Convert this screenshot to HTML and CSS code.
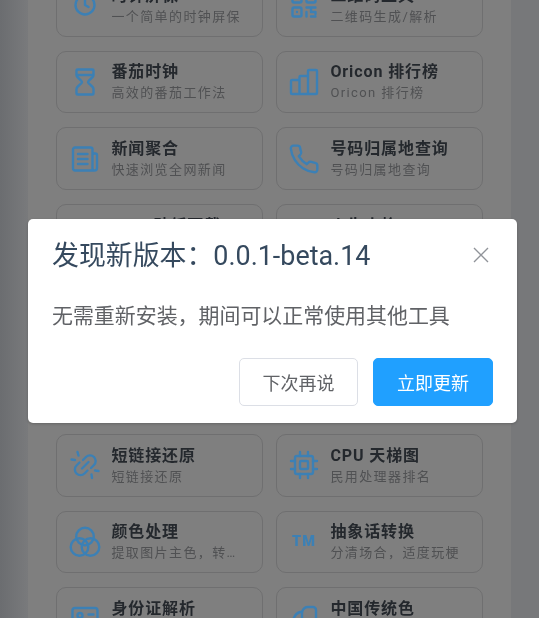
FILE: index.html
```html
<!DOCTYPE html>
<html lang="en">
<head>
    <meta charset="UTF-8">
    <meta name="viewport" content="width=device-width, initial-scale=1.0">
    <title>工具箱</title>
    <link rel="stylesheet" href="styles.css">
</head>
<body>
    <div class="page">
        <div class="side-left"></div>
        <div class="panel">
            <div class="tool-grid">
                <div class="card">
                    <svg class="icon" viewBox="0 0 32 32"><circle cx="16" cy="16" r="9.5"/><path d="M16 10v6l3.500 2"/></svg>
                    <div class="card-text"><div class="card-title">时钟屏保</div><div class="card-sub">一个简单的时钟屏保</div></div>
                </div>
                <div class="card">
                    <svg class="icon" viewBox="0 0 32 32"><rect x="4.500" y="4.500" width="9" height="9" rx="1.500"/><rect x="18.500" y="4.500" width="9" height="9" rx="1.500"/><rect x="4.500" y="18.500" width="9" height="9" rx="1.500"/><path d="M9 23h.01M18.500 18.500h9M23 18.500v4.500h4.500v2M27.500 27.500h-4.500M18.500 23v4.500"/></svg>
                    <div class="card-text"><div class="card-title">二维码工具</div><div class="card-sub">二维码生成/解析</div></div>
                </div>
                <div class="card">
                    <svg class="icon" viewBox="0 0 32 32"><path d="M8.500 3.500h15a1 1 0 0 1 1 1V9c0 3-5.500 5-5.500 7s5.500 4 5.500 7v4.500a1 1 0 0 1-1 1h-15a1 1 0 0 1-1-1V23c0-3 5.500-5 5.500-7s-5.500-4-5.500-7V4.500a1 1 0 0 1 1-1z"/><path d="M8 9h16"/></svg>
                    <div class="card-text"><div class="card-title">番茄时钟</div><div class="card-sub">高效的番茄工作法</div></div>
                </div>
                <div class="card">
                    <svg class="icon" viewBox="0 0 32 32"><path d="M3 15a1 1 0 0 1 1-1h7.500v14H4a1 1 0 0 1-1-1zM11.500 11a1 1 0 0 1 1-1H20v18h-8.500zM20 5a1 1 0 0 1 1-1h7a1 1 0 0 1 1 1v22a1 1 0 0 1-1 1h-8z"/></svg>
                    <div class="card-text"><div class="card-title">Oricon 排行榜</div><div class="card-sub">Oricon 排行榜</div></div>
                </div>
                <div class="card">
                    <svg class="icon" viewBox="0 0 32 32"><path d="M23.500 27.500H6a2 2 0 0 1-2-2V6.500a2 2 0 0 1 2-2h15.500a2 2 0 0 1 2 2zM23.500 10.500h3a1.500 1.500 0 0 1 1.500 1.500v13a2.500 2.500 0 0 1-2.500 2.500h-2"/><path d="M9 11h9.500M9 16h9.500M9 21h9.500"/></svg>
                    <div class="card-text"><div class="card-title">新闻聚合</div><div class="card-sub">快速浏览全网新闻</div></div>
                </div>
                <div class="card">
                    <svg class="icon icon-24" viewBox="0 0 24 24"><path d="M22 16.920v3a2 2 0 0 1-2.180 2 19.790 19.790 0 0 1-8.630-3.070 19.500 19.500 0 0 1-6-6 19.790 19.790 0 0 1-3.070-8.670A2 2 0 0 1 4.110 2h3a2 2 0 0 1 2 1.720 12.840 12.840 0 0 0 .7 2.810 2 2 0 0 1-.45 2.110L8.090 9.910a16 16 0 0 0 6 6l1.270-1.270a2 2 0 0 1 2.110-.45 12.840 12.840 0 0 0 2.810.7A2 2 0 0 1 22 16.920z"/></svg>
                    <div class="card-text"><div class="card-title">号码归属地查询</div><div class="card-sub">号码归属地查询</div></div>
                </div>
                <div class="card">
                    <div class="icon"></div>
                    <div class="card-text"><div class="card-title">LINE 贴纸下载</div><div class="card-sub">LINE 贴纸下载</div></div>
                </div>
                <div class="card">
                    <div class="icon"></div>
                    <div class="card-text"><div class="card-title">人生小格</div><div class="card-sub">人生小格</div></div>
                </div>
                <div class="card"></div>
                <div class="card"></div>
                <div class="card"></div>
                <div class="card"></div>
                <div class="card">
                    <svg class="icon" viewBox="0 0 32 32"><path d="M14 11l3-3a5.500 5.500 0 0 1 8 8l-3 3M18.500 21.500l-3 3a5.500 5.500 0 0 1-8-8l3-3M13 19.500l6.500-6.500M8.500 3l1 3.500M2.500 10.500l3.500 .5M22.500 25.500l.5 3.500M26 21.500l3.500 .5"/></svg>
                    <div class="card-text"><div class="card-title">短链接还原</div><div class="card-sub">短链接还原</div></div>
                </div>
                <div class="card">
                    <svg class="icon" viewBox="0 0 32 32"><rect x="7" y="7" width="18" height="18" rx="2"/><rect x="12" y="12" width="8" height="8" rx="1"/><path d="M12 3v4M20 3v4M12 25v4M20 25v4M3 12h4M3 20h4M25 12h4M25 20h4"/></svg>
                    <div class="card-text"><div class="card-title">CPU 天梯图</div><div class="card-sub">民用处理器排名</div></div>
                </div>
                <div class="card">
                    <svg class="icon" viewBox="0 0 32 32"><circle cx="16" cy="10.500" r="8.800"/><circle cx="10.500" cy="21" r="8.800"/><circle cx="21.500" cy="21" r="8.800"/></svg>
                    <div class="card-text"><div class="card-title">颜色处理</div><div class="card-sub">提取图片主色，转换颜色格式</div></div>
                </div>
                <div class="card">
                    <div class="icon icon-tm">TM</div>
                    <div class="card-text"><div class="card-title">抽象话转换</div><div class="card-sub">分清场合，适度玩梗</div></div>
                </div>
                <div class="card">
                    <svg class="icon" viewBox="0 0 32 32"><rect x="3.500" y="5" width="25" height="21" rx="2.500"/><circle cx="11" cy="12.500" r="2.500"/><path d="M7 21c.5-2.500 7.500-2.500 8 0M19.500 11.500h5M19.500 17h5"/></svg>
                    <div class="card-text"><div class="card-title">身份证解析</div><div class="card-sub">身份证号码解析</div></div>
                </div>
                <div class="card">
                    <svg class="icon" viewBox="0 0 32 32"><path d="M4 26c0-8 2-15 8-17h2c1-3 3-5 6-5h5a3 3 0 0 1 3 3v19a3 3 0 0 1-3 3H7a3 3 0 0 1-3-3z"/><path d="M14 9v20"/></svg>
                    <div class="card-text"><div class="card-title">中国传统色</div><div class="card-sub">中国传统颜色</div></div>
                </div>
            </div>
        </div>
        <div class="side-right"></div>
    </div>

    <div class="overlay">
        <div class="dialog">
            <div class="dialog-header">
                <span class="dialog-title">发现新版本：0.0.1-beta.14</span>
                <svg class="dialog-close" viewBox="0 0 16 16"><path d="M1 1l14 14M15 1L1 15"/></svg>
            </div>
            <div class="dialog-body">无需重新安装，期间可以正常使用其他工具</div>
            <div class="dialog-footer">
                <button class="btn">下次再说</button>
                <button class="btn btn-primary">立即更新</button>
            </div>
        </div>
    </div>
</body>
</html>
```

FILE: styles.css
```css
body {
    margin: 0;
    height: 618px;
    overflow: hidden;
    background-color: #77787a;
    font-family: Roboto, "Noto Sans CJK SC", sans-serif;
}
.page {
    display: flex;
    height: 618px;
    overflow: hidden;
    filter: blur(0.4px);
}
.side-left {
    width: 28px;
    background: linear-gradient(to right, #6b6d70, #797a7c);
}
.panel {
    width: 483px;
    background-color: #7f7f7f;
}
.side-right {
    flex: 1;
    background-color: #77787a;
}
.tool-grid {
    display: grid;
    grid-template-columns: 1fr 1fr;
    grid-auto-rows: 62.67px;
    gap: 14px 13px;
    margin: -26px 28px 0;
}
.card {
    display: flex;
    align-items: center;
    gap: 10.4px;
    padding: 0 18px 0 12px;
    border: 1.3px solid #6f6f70;
    border-radius: 10px;
    box-sizing: border-box;
    min-width: 0;
}
.card:nth-child(even) {
    padding-left: 11px;
}
.icon {
    flex: none;
    width: 32px;
    height: 32px;
    fill: none;
    stroke: #3c80b5;
    stroke-width: 2.4;
    stroke-linecap: round;
    stroke-linejoin: round;
}
.icon-24 {
    stroke-width: 1.8;
}
.icon-tm {
    color: #3c80b5;
    font-size: 14.5px;
    font-weight: 900;
    line-height: 32px;
    text-align: center;
    letter-spacing: 1px;
}
.card-text {
    min-width: 0;
}
.card-title {
    font-size: 16px;
    line-height: 22px;
    font-weight: 700;
    letter-spacing: 0.9px;
    color: #24282d;
    white-space: nowrap;
}
.card-sub {
    font-size: 13px;
    line-height: 19px;
    letter-spacing: 1.4px;
    color: #505153;
    white-space: nowrap;
    overflow: hidden;
    text-overflow: ellipsis;
}
.overlay {
    position: fixed;
    top: 0;
    left: 0;
    right: 0;
    bottom: 0;
    padding: 219px 0 0 28px;
}
.dialog {
    box-sizing: border-box;
    width: 489px;
    height: 204px;
    padding: 0 24px;
    background-color: #ffffff;
    border-radius: 5px;
    box-shadow: 0 1px 3px rgba(0,0,0,0.2);
}
.dialog-header {
    display: flex;
    justify-content: space-between;
    align-items: center;
    padding: 17px 0 0 0;
    height: 40px;
}
.dialog-title {
    font-size: 26.9px;
    line-height: 40px;
    color: #35495e;
}
.dialog-close {
    width: 16px;
    height: 16px;
    margin: 0 4px 2px 0;
    fill: none;
    stroke: #909399;
    stroke-width: 1.4;
}
.dialog-body {
    margin-top: 24px;
    font-size: 20.95px;
    line-height: 32px;
    color: #606266;
}
.dialog-footer {
    display: flex;
    justify-content: flex-end;
    gap: 15px;
    margin-top: 26px;
}
.btn {
    width: 119px;
    height: 48px;
    padding: 0;
    background-color: #ffffff;
    border: 1px solid #dcdfe6;
    border-radius: 5px;
    color: #606266;
    font-family: inherit;
    font-size: 18px;
    cursor: pointer;
}
.btn-primary {
    width: 120px;
    background-color: #20a0ff;
    border-color: #20a0ff;
    color: #ffffff;
}
```
